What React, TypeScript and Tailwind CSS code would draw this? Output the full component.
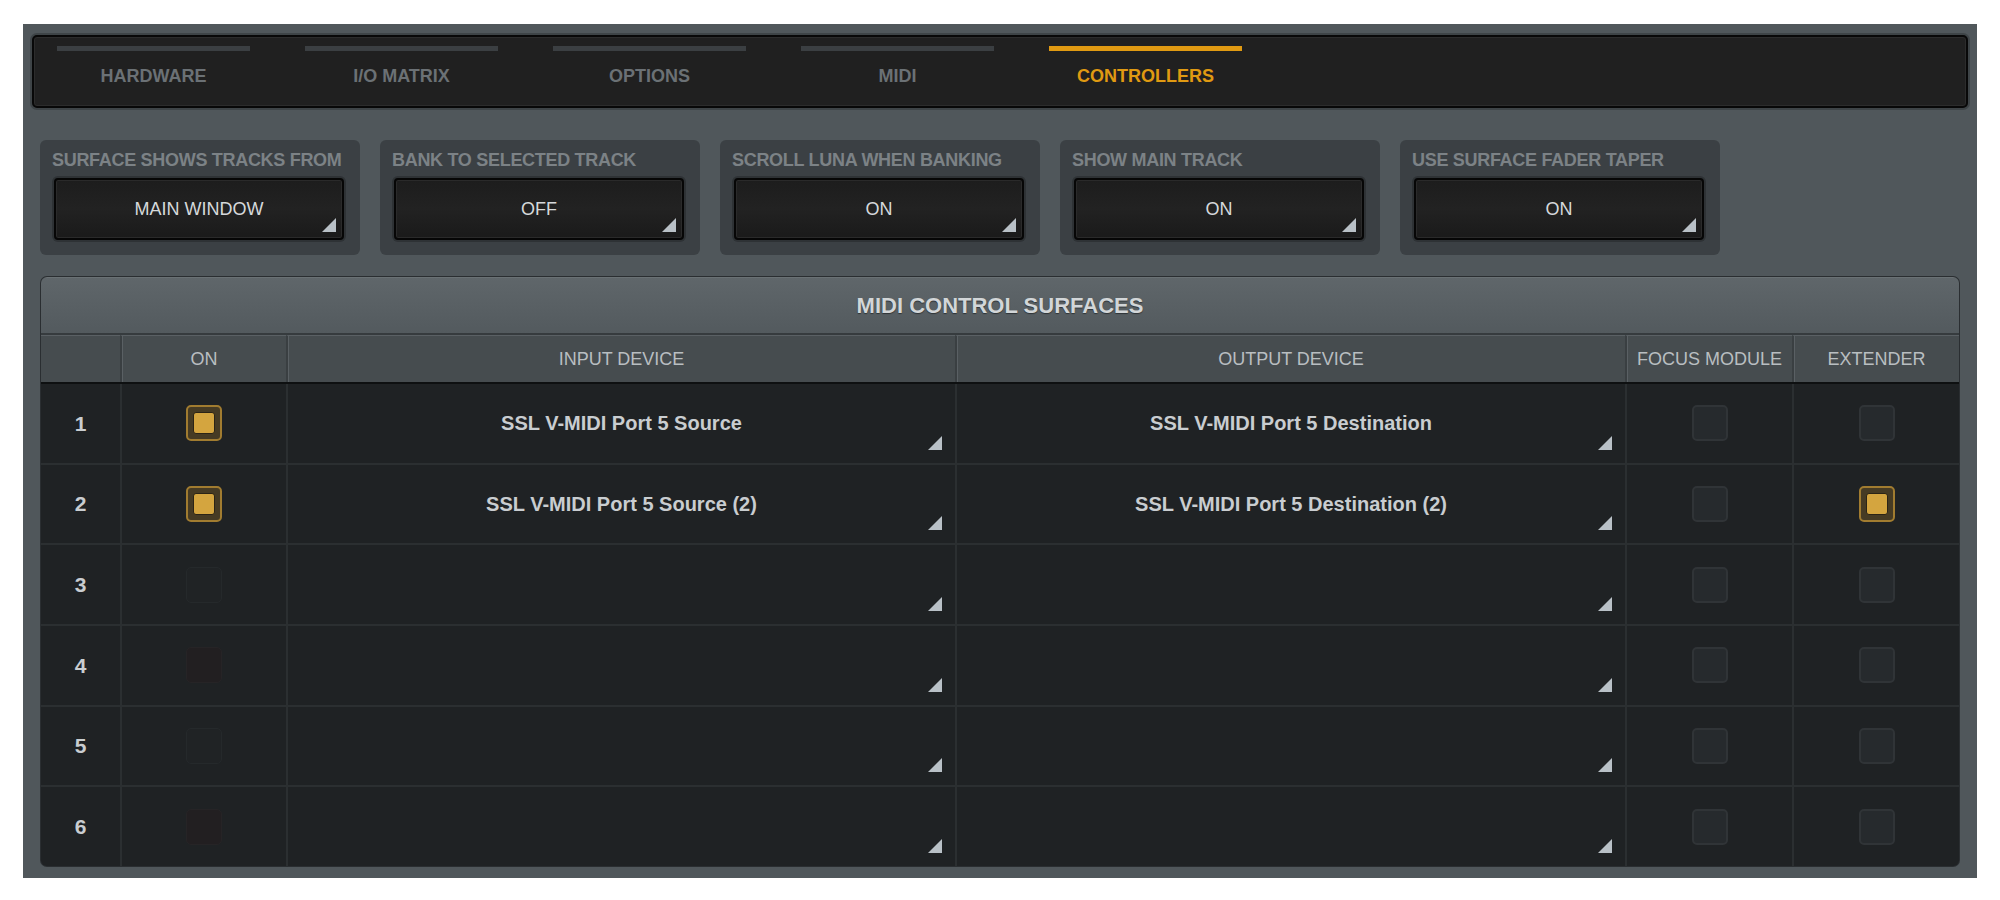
import React from "react";

const tabs = ["HARDWARE", "I/O MATRIX", "OPTIONS", "MIDI", "CONTROLLERS"];

const settings = [
  { label: "SURFACE SHOWS TRACKS FROM", value: "MAIN WINDOW" },
  { label: "BANK TO SELECTED TRACK", value: "OFF" },
  { label: "SCROLL LUNA WHEN BANKING", value: "ON" },
  { label: "SHOW MAIN TRACK", value: "ON" },
  { label: "USE SURFACE FADER TAPER", value: "ON" },
];

const rows = [
  { on: true, input: "SSL V-MIDI Port 5 Source", output: "SSL V-MIDI Port 5 Destination", focus: false, ext: false },
  { on: true, input: "SSL V-MIDI Port 5 Source (2)", output: "SSL V-MIDI Port 5 Destination (2)", focus: false, ext: true },
  { on: false, input: "", output: "", focus: false, ext: false },
  { on: false, input: "", output: "", focus: false, ext: false },
  { on: false, input: "", output: "", focus: false, ext: false },
  { on: false, input: "", output: "", focus: false, ext: false },
];

const Corner = ({ className }: { className: string }) => (
  <svg width="14" height="14" viewBox="0 0 14 14" className={className}>
    <polygon points="14,0 14,14 0,14" fill="#b9c1c7" />
  </svg>
);

const Check = ({ checked, faint, warm }: { checked: boolean; faint?: boolean; warm?: boolean }) => {
  if (checked) {
    return (
      <div className="flex h-[36px] w-[36px] items-center justify-center rounded-[5px] border-2 border-[#a17c30] bg-[#463b24]">
        <div className="h-[22px] w-[22px] rounded-[3px] border border-[#2b2416] bg-[#d4a53f]" />
      </div>
    );
  }
  if (faint) {
    return (
      <div
        className={
          warm
            ? "h-[36px] w-[36px] rounded-[5px] border border-[#262426] bg-[#221f21]"
            : "h-[36px] w-[36px] rounded-[5px] border border-[#25292b] bg-[#202325]"
        }
      />
    );
  }
  return <div className="h-[36px] w-[36px] rounded-[5px] border-2 border-[#303437] bg-[#262a2d]" />;
};

const cols = "grid grid-cols-[79px_166px_669px_670px_167px_167px]";

export default function App() {
  return (
    <div className="min-h-screen bg-white px-[23px] pt-[24px] pb-[22px] font-['Liberation_Sans',Arial,sans-serif]">
      <div className="flex h-[854px] flex-col bg-[#50575b] pt-[9px] pb-[12px]">
        {/* tab strip */}
        <div className="mx-[7px] rounded-[7px] bg-[#3e4447] p-[2px]">
          <div className="flex h-[73px] gap-[55px] rounded-[5px] border-2 border-[#080808] bg-[#202020] px-[23px] shadow-[inset_0_0_0_1px_#2c2c2c]">
            {tabs.map((t) => {
              const active = t === "CONTROLLERS";
              return (
                <div key={t} className="flex w-[193px] flex-col items-center pt-[9px]">
                  <div className={active ? "h-[5px] w-full bg-[#e09a12]" : "h-[5px] w-full bg-[#3b3f42]"} />
                  <span
                    className={
                      active
                        ? "mt-[14px] text-[18px] font-bold leading-[22px] text-[#e09a12]"
                        : "mt-[14px] text-[18px] font-bold leading-[22px] text-[#6b7175]"
                    }
                  >
                    {t}
                  </span>
                </div>
              );
            })}
          </div>
        </div>

        {/* settings */}
        <div className="mt-[30px] flex gap-[20px] px-[17px]">
          {settings.map((s) => (
            <div key={s.label} className="flex h-[115px] w-[320px] flex-col rounded-[6px] bg-[#3b4044] pl-[12px] pr-[12px] pt-[10px]">
              <span className="whitespace-nowrap text-[18px] font-bold leading-[20px] tracking-[-0.3px] text-[#7c8286]">
                {s.label}
              </span>
              <div className="mt-[6px] mr-[2px] rounded-[6px] bg-[#2e3235] p-[2px]">
                <div className="relative flex h-[62px] items-center justify-center rounded-[4px] border-2 border-[#060606] bg-[linear-gradient(180deg,#1d1d1d_0%,#222222_50%,#1a1a1a_100%)] shadow-[inset_0_0_0_1px_#2a2a2a]">
                  <span className="text-[18px] leading-[22px] text-[#d6d9db]">{s.value}</span>
                  <Corner className="absolute bottom-[6px] right-[6px]" />
                </div>
              </div>
            </div>
          ))}
        </div>

        {/* table */}
        <div className="mx-[18px] mt-[22px] flex flex-1 flex-col overflow-hidden rounded-[6px] bg-[#1f2224] shadow-[0_0_0_1px_#2a2e31]">
          <div className="flex h-[58px] items-center justify-center border-t border-[#6a7174] bg-[linear-gradient(180deg,#5f666a_0%,#535a5e_100%)] border-b-2 border-b-[#363b3e]">
            <span className="text-[22px] font-bold text-[#d2d6d8] [text-shadow:0_1px_1px_#2f3437]">MIDI CONTROL SURFACES</span>
          </div>
          <div className={`${cols} h-[49px] border-b-2 border-[#0e1011] bg-[#464c4f]`}>
            {["", "ON", "INPUT DEVICE", "OUTPUT DEVICE", "FOCUS MODULE", "EXTENDER"].map((h, i) => (
              <div
                key={i}
                className={
                  i === 0
                    ? "flex items-center justify-center border-t border-[#5a6064]"
                    : "flex items-center justify-center border-t border-l-2 border-t-[#5a6064] border-l-[#3a3f42] shadow-[inset_1px_0_0_#5a6064]"
                }
              >
                <span className="text-[18px] text-[#b9bec1]">{h}</span>
              </div>
            ))}
          </div>
          {rows.map((r, i) => (
            <div key={i} className={`${cols} flex-1 ${i < rows.length - 1 ? "border-b-2 border-[#2b2f31]" : ""}`}>
              <div className="flex items-center justify-center">
                <span className="text-[21px] font-bold text-[#c9cdd0]">{i + 1}</span>
              </div>
              <div className="flex items-center justify-center border-l-2 border-[#2b2f31]">
                <Check checked={r.on} faint={!r.on} warm={i === 3 || i === 5} />
              </div>
              <div className="relative flex items-center justify-center border-l-2 border-[#2b2f31]">
                <span className="text-[20px] font-bold text-[#c9cdd0]">{r.input}</span>
                <Corner className="absolute bottom-[13px] right-[13px]" />
              </div>
              <div className="relative flex items-center justify-center border-l-2 border-[#2b2f31]">
                <span className="text-[20px] font-bold text-[#c9cdd0]">{r.output}</span>
                <Corner className="absolute bottom-[13px] right-[13px]" />
              </div>
              <div className="flex items-center justify-center border-l-2 border-[#2b2f31]">
                <Check checked={r.focus} />
              </div>
              <div className="flex items-center justify-center border-l-2 border-[#2b2f31]">
                <Check checked={r.ext} />
              </div>
            </div>
          ))}
        </div>
      </div>
    </div>
  );
}
